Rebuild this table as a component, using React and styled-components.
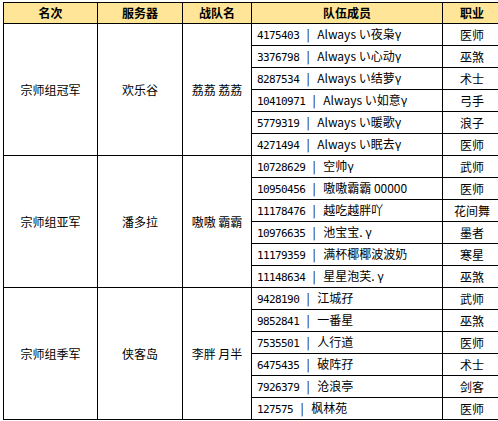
import styled, { createGlobalStyle } from "styled-components";

const groups = [
  {
    rank: "宗师组冠军",
    server: "欢乐谷",
    team: "荔荔 荔荔",
    members: [
      ["4175403", "Always い夜枭γ", "医师"],
      ["3376798", "Always い心动γ", "巫煞"],
      ["8287534", "Always い结萝γ", "术士"],
      ["10410971", "Always い如意γ", "弓手"],
      ["5779319", "Always い暖歌γ", "浪子"],
      ["4271494", "Always い眠去γ", "医师"],
    ],
  },
  {
    rank: "宗师组亚军",
    server: "潘多拉",
    team: "嗷嗷 霸霸",
    members: [
      ["10728629", "空帅γ", "武师"],
      ["10950456", "嗷嗷霸霸 00000", "医师"],
      ["11178476", "越吃越胖吖", "花间舞"],
      ["10976635", "池宝宝. γ", "墨者"],
      ["11179359", "满杯椰椰波波奶", "寒星"],
      ["11148634", "星星泡芙. γ", "巫煞"],
    ],
  },
  {
    rank: "宗师组季军",
    server: "侠客岛",
    team: "李胖 月半",
    members: [
      ["9428190", "江城孖", "武师"],
      ["9852841", "一番星", "巫煞"],
      ["7535501", "人行道", "医师"],
      ["6475435", "破阵孖", "术士"],
      ["7926379", "沧浪亭", "剑客"],
      ["127575", "枫林苑", "医师"],
    ],
  },
];

const GlobalStyle = createGlobalStyle`
  body {
    margin: 0;
    background: #fff;
    font-family: "Noto Sans CJK SC", "Liberation Sans", sans-serif;
    color: #000;
  }
`;

const Page = styled.div`
  padding: 2px 0 0 3px;
`;

const Table = styled.table`
  width: 494px;
  border-collapse: collapse;
  table-layout: fixed;
  font-size: 12px;
  line-height: 14px;
`;

const HeadRow = styled.tr`
  height: 21px;
  background: #ffe597;
`;

const Th = styled.th`
  border: 1px solid #000;
  padding: 0;
  font-weight: 700;
  text-align: center;
  width: ${({ $w }) => $w}px;
`;

const Row = styled.tr`
  height: 22px;
`;

const Cell = styled.td`
  border: 1px solid #000;
  padding: 0;
  text-align: center;
  vertical-align: middle;
`;

const MemberCell = styled.td`
  border: 1px solid #000;
  padding: 0 0 0 5px;
  text-align: left;
  white-space: nowrap;
`;

const Id = styled.span`
  font-family: "DejaVu Sans Mono", monospace;
  font-size: 11px;
  letter-spacing: -0.6px;
`;

const Sep = styled.span`
  display: inline-block;
  width: 18px;
  text-align: center;
`;

export default function App() {
  return (
    <Page>
      <GlobalStyle />
      <Table>
        <thead>
          <HeadRow>
            <Th $w={93}>名次</Th>
            <Th $w={84}>服务器</Th>
            <Th $w={68}>战队名</Th>
            <Th $w={190}>队伍成员</Th>
            <Th $w={58}>职业</Th>
          </HeadRow>
        </thead>
        <tbody>
          {groups.map((g) =>
            g.members.map(([id, name, job], i) => (
              <Row key={g.rank + id}>
                {i === 0 && (
                  <>
                    <Cell rowSpan={6}>{g.rank}</Cell>
                    <Cell rowSpan={6}>{g.server}</Cell>
                    <Cell rowSpan={6}>{g.team}</Cell>
                  </>
                )}
                <MemberCell>
                  <Id>{id}</Id>
                  <Sep>|</Sep>
                  {name}
                </MemberCell>
                <Cell>{job}</Cell>
              </Row>
            ))
          )}
        </tbody>
      </Table>
    </Page>
  );
}
